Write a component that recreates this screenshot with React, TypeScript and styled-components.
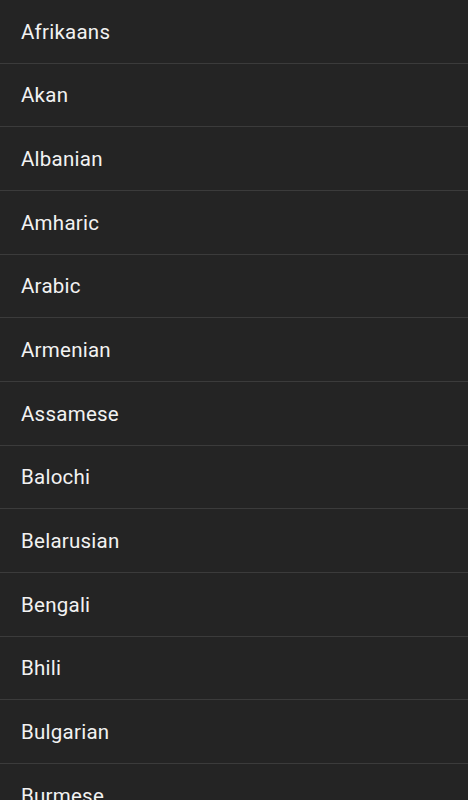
import styled, { createGlobalStyle } from 'styled-components'

const GlobalStyle = createGlobalStyle`
  html, body {
    margin: 0;
    padding: 0;
    background: #242424;
  }
  body {
    font-family: Roboto, "Noto Sans", sans-serif;
  }
`

const List = styled.ul`
  list-style: none;
  margin: 0;
  padding: 0;
  width: 468px;
  height: 800px;
  overflow: hidden;
  background: #242424;
`

const Item = styled.li`
  box-sizing: border-box;
  height: 63.67px;
  display: flex;
  align-items: center;
  padding: 1px 21px 0;
  border-bottom: 1px solid #3b3b3b;
  color: #f2f2f2;
  font-size: 20.5px;
  font-weight: 400;
  letter-spacing: 0.25px;
`

const languages = [
  'Afrikaans',
  'Akan',
  'Albanian',
  'Amharic',
  'Arabic',
  'Armenian',
  'Assamese',
  'Balochi',
  'Belarusian',
  'Bengali',
  'Bhili',
  'Bulgarian',
  'Burmese',
]

function App() {
  return (
    <>
      <GlobalStyle />
      <List>
        {languages.map((lang) => (
          <Item key={lang}>{lang}</Item>
        ))}
      </List>
    </>
  )
}

export default App
